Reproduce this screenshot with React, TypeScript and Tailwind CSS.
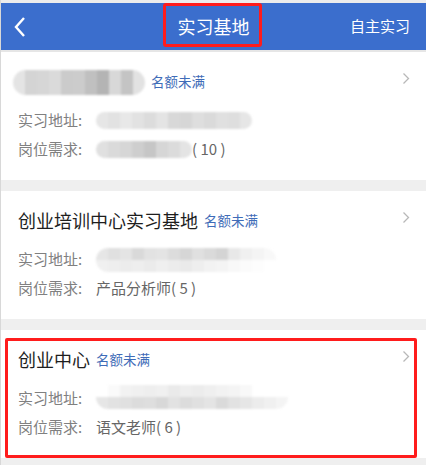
import React from "react";

const font = { fontFamily: '"Noto Sans CJK SC", "Noto Sans", sans-serif' };

// mosaic blur standing in for hidden text
const Mosaic: React.FC<{ cells: string[]; cellW: number; h: number; rows?: string[] }> = ({ cells, cellW, h, rows }) => (
  <div className="flex flex-col overflow-hidden rounded-full blur-[1px]">
    <div className="flex">
      {cells.map((c, i) => (
        <div key={i} style={{ background: c, width: cellW, height: rows ? h / 2 : h }} />
      ))}
    </div>
    {rows && (
      <div className="flex">
        {rows.map((c, i) => (
          <div key={i} style={{ background: c, width: cellW, height: h / 2 }} />
        ))}
      </div>
    )}
  </div>
);

const Chevron = () => (
  <svg width="8" height="13" viewBox="0 0 8 13" className="absolute right-[16px] top-[20px]">
    <path d="M1.5 1.5 L6.5 6.5 L1.5 11.5" fill="none" stroke="#b8b8b8" strokeWidth="1.3" />
  </svg>
);

const Card: React.FC<{ title: React.ReactNode; address: React.ReactNode; job: React.ReactNode; mark?: boolean }> = ({ title, address, job, mark }) => (
  <div className="relative bg-white h-[128px] pt-[18px]">
    <Chevron />
    <div className="flex items-center h-[22px] pl-[17px]">
      {title}
      <span className="ml-[6px] text-[13.5px] text-[#3f6cb8]">名额未满</span>
    </div>
    <div className="mt-[14px] pl-[17px] text-[15px] text-[#808080]">
      <div className="flex items-center h-[29px]">
        <span className="w-[78px]">实习地址:</span>
        {address}
      </div>
      <div className="flex items-center h-[29px]">
        <span className="w-[78px]">岗位需求:</span>
        {job}
      </div>
    </div>
    {mark && (
      <div className="absolute left-[4px] right-[9px] top-[8px] bottom-0 border-[3px] border-[#ff1c1c] rounded-[2px]" />
    )}
  </div>
);

export default function App() {
  return (
    <div style={font} className="w-[426px] h-[465px] overflow-hidden bg-[#efefef] border-l border-[#d8d8d8]">
      <div className="h-[3px] bg-[#ececec]" />
      {/* header */}
      <div className="relative flex items-center justify-between h-[47px] bg-[#3b6ecd] text-white">
        <svg width="14" height="22" viewBox="0 0 14 22" className="ml-[12px]">
          <path d="M11 2 L3 11 L11 20" fill="none" stroke="white" strokeWidth="2.4" />
        </svg>
        <span className="absolute left-1/2 -translate-x-1/2 text-[18px]">实习基地</span>
        <div className="absolute left-[162px] top-0 w-[99px] h-[44px] border-[3px] border-[#ff1c1c] rounded-[3px]" />
        <span className="mr-[16px] text-[15px]">自主实习</span>
      </div>
      <div className="h-[2px] bg-[#e6e6e6]" />

      <Card
        title={
          <div className="-ml-[5px] mt-[2px]">
            <Mosaic
              cellW={12}
              h={25}
              cells={["#e4e4e4", "#d4d4d4", "#d6d6d6", "#dadada", "#cbcbcb", "#cccccc", "#c0c0c0", "#b4b4b4", "#d8d8d8", "#c4c4c4", "#e2e2e2"]}
            />
          </div>
        }
        address={
          <Mosaic
            cellW={12}
            h={17}
            cells={["#e6e6e6", "#e2e2e2", "#e8e8e8", "#e2e2e2", "#dcdcdc", "#e4e4e4", "#d8d8d8", "#d6d6d6", "#dedede", "#dadada", "#e0e0e0", "#dedede", "#e6e6e6"]}
          />
        }
        job={
          <span className="flex items-center text-[#666]">
            <Mosaic cellW={12} h={17} cells={["#e0e0e0", "#dadada", "#d6d6d6", "#cecece", "#c6c6c6", "#d6d6d6", "#dbdbdb", "#e4e4e4"]} />
            <span>(&nbsp;10&nbsp;)</span>
          </span>
        }
      />
      <div className="h-[11px]" />
      <Card
        title={<span className="text-[18px] text-[#1e1e1e]">创业培训中心实习基地</span>}
        address={
          <Mosaic
            cellW={12}
            h={24}
            cells={["#e6e6e6", "#e0e0e0", "#e4e4e4", "#d9d9d9", "#e2e2e2", "#e4e4e4", "#dcdcdc", "#d6d6d6", "#e0e0e0", "#dadada", "#d4d4d4", "#e8e8e8", "#f0f0f0", "#f4f4f4", "#f8f8f8"]}
            rows={["#f0f0f0", "#eeeeee", "#ececec", "#eeeeee", "#ebebeb", "#efefef", "#ececec", "#eaeaea", "#eeeeee", "#f2f2f2", "#f4f4f4", "#f8f8f8", "#fbfbfb", "#fdfdfd", "#ffffff"]}
          />
        }
        job={<span className="text-[#666]">产品分析师(&nbsp;5&nbsp;)</span>}
      />
      <div className="h-[11px]" />
      <Card
        mark
        title={<span className="text-[18px] text-[#1e1e1e]">创业中心</span>}
        address={
          <div className="mt-[-4px]">
            <Mosaic
              cellW={12}
              h={24}
              cells={["#ffffff", "#fafafa", "#f2f2f2", "#f0f0f0", "#eeeeee", "#f0f0f0", "#eaeaea", "#eeeeee", "#ececec", "#efefef", "#f2f2f2", "#f4f4f4", "#f8f8f8", "#ffffff", "#ffffff", "#ffffff"]}
              rows={["#e6e6e6", "#e2e2e2", "#e0e0e0", "#dcdcdc", "#dedede", "#d8d8d8", "#e2e2e2", "#dcdcdc", "#e0e0e0", "#e4e4e4", "#dadada", "#e2e2e2", "#e6e6e6", "#ececec", "#f0f0f0", "#f4f4f4"]}
            />
          </div>
        }
        job={<span className="text-[#666]">语文老师(&nbsp;6&nbsp;)</span>}
      />
    </div>
  );
}
